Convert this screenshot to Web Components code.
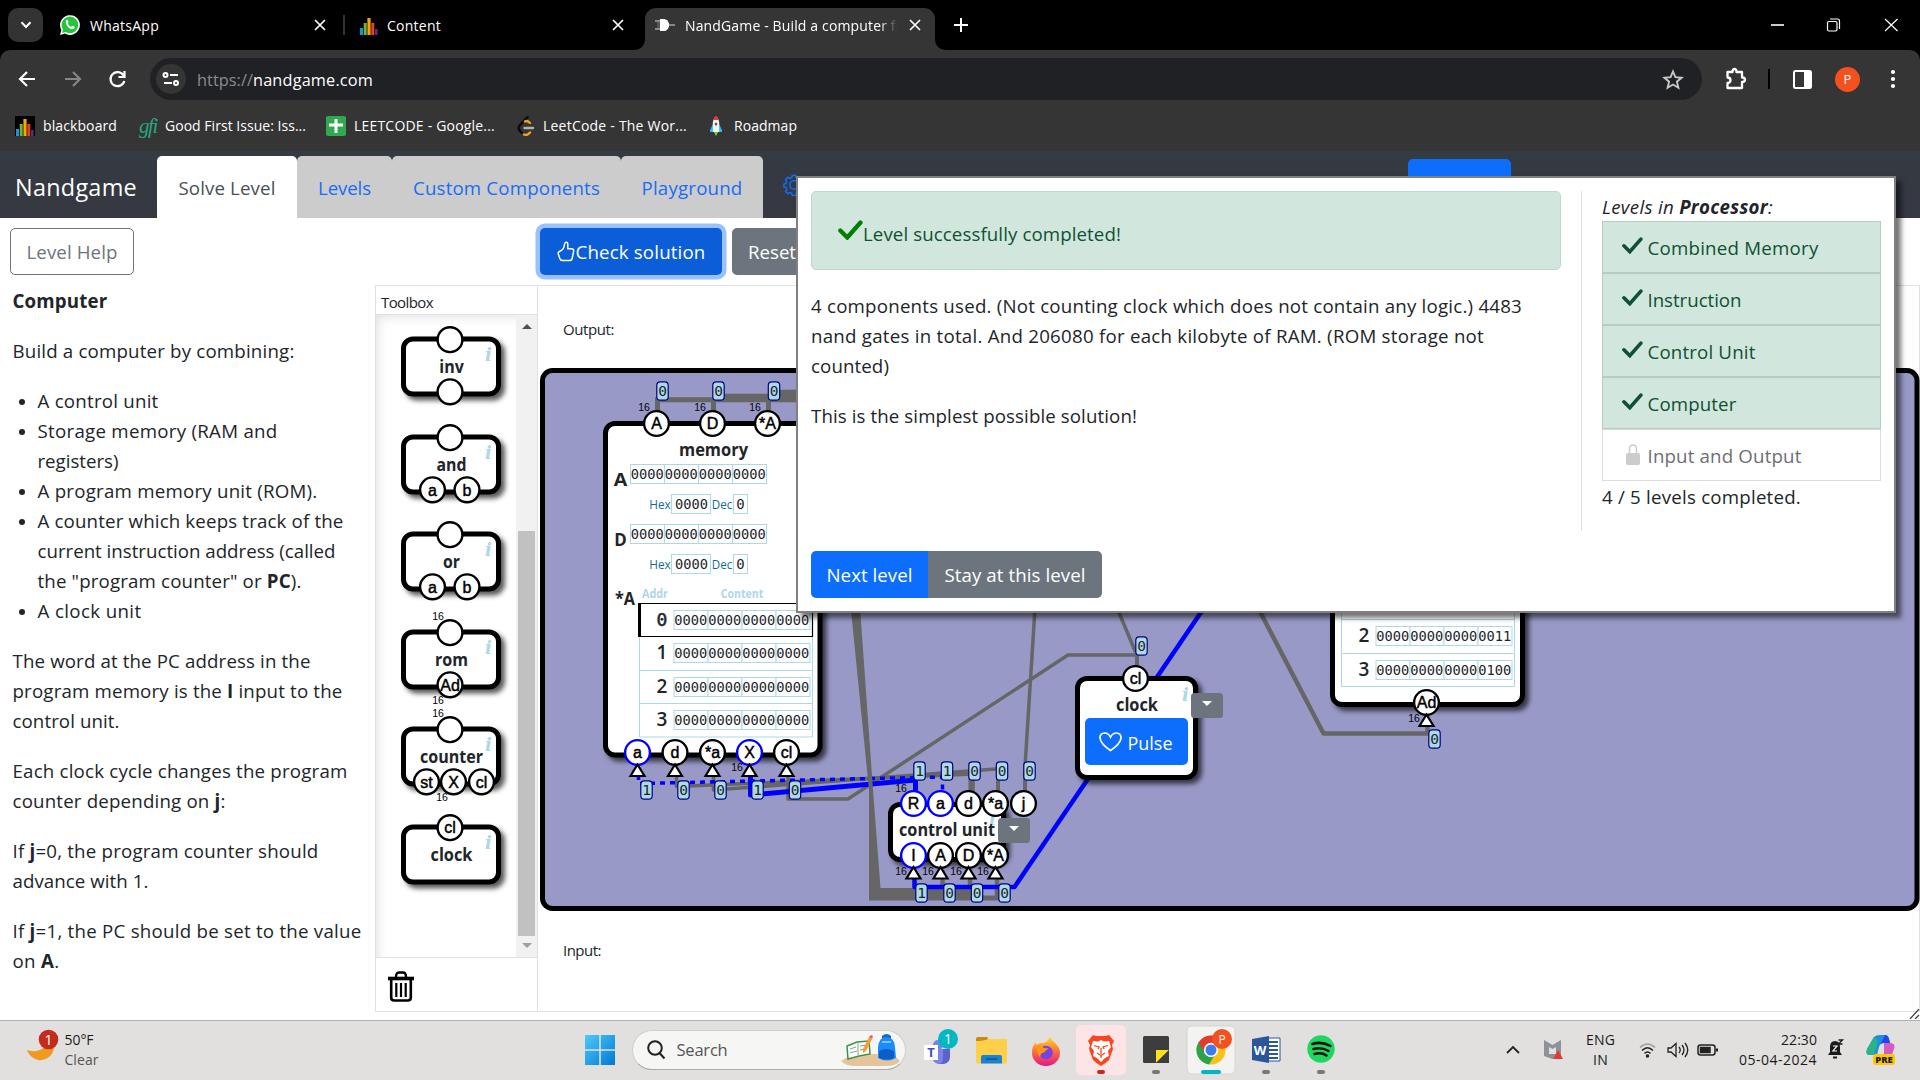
<!DOCTYPE html>
<html lang="en"><head><meta charset="utf-8"><title>NandGame - Build a computer from scratch</title>
<style>
html,body{margin:0;padding:0;width:1920px;height:1080px;overflow:hidden;background:#fff}
body{display:flex;flex-direction:column;font-family:"Open Sans","Noto Sans",sans-serif;color:#212529;font-size:18.7px}
</style></head><body>
<tab-strip></tab-strip>
<nav-bar></nav-bar>
<bookmark-bar></bookmark-bar>
<app-header></app-header>
<app-main></app-main>
<task-bar></task-bar>
<level-dialog></level-dialog>
<script>
function define(name, html){
  const t=document.createElement('template'); t.innerHTML=html;
  customElements.define(name,class extends HTMLElement{
    constructor(){super();this.attachShadow({mode:'open'}).appendChild(t.content.cloneNode(true));}
  });
}
const X=`<svg width="12" height="12" viewBox="0 0 12 12" stroke="#fff" stroke-width="1.7"><path d="M1 1l10 10M11 1L1 11"/></svg>`;
const bars=(bg)=>`<svg width="20" height="20" viewBox="0 0 20 20">${bg?'<path d="M0 0h20v20H0z" fill="#000"/>':''}<path d="M1 13h3v7H1z" fill="#1e90e8"/><path d="M4.7 8h3v12h-3z" fill="#6cb33f"/><path d="M8.4 3h3.2v17H8.4z" fill="#f5a800"/><path d="M12.300 8h3v12h-3z" fill="#e8402a"/><path d="M16 14h2.600v6H16z" fill="#5b2a86"/></svg>`;

/* ---------- browser tab strip ---------- */
define('tab-strip',`<style>
:host{display:flex;height:50px;background:#000;color:#fff;font-size:14px;align-items:center;flex:none;line-height:20px;box-shadow:0 12px 0 #000}
.dd{width:35px;height:34px;border-radius:10px;background:#333;margin-left:8px;display:flex;align-items:center;justify-content:center}
.tab{display:flex;align-items:center;height:50px;box-sizing:border-box}
svg{display:block;flex:none}.sp{flex:1}
fit-text{padding-top:1px}
.act{background:#353535;height:42px;align-self:flex-end;border-radius:11px 11px 0 0;width:290px;padding:0 14px 8px 10px}
.fade{width:212px;overflow:hidden;white-space:nowrap;margin-left:10px;-webkit-mask-image:linear-gradient(90deg,#000 195px,transparent 212px);mask-image:linear-gradient(90deg,#000 195px,transparent 212px)}
</style>
<div class="dd"><svg width="12" height="8" viewBox="0 0 12 8" fill="none" stroke="#fff" stroke-width="2"><path d="M1.500 1.200L6 6l4.500-4.800"/></svg></div>
<div class="tab" style="width:301px;margin-left:17px"><svg width="20" height="20" viewBox="0 0 20 20"><path d="M0 20l1.400-5A9.900 9.900 0 1 1 5 18.600z" fill="#fff"/><path d="M2 18l1-3.500A8.300 8.300 0 1 1 5.600 17z" fill="#25c43c"/><path d="M6.200 5.200c.8-.8 1.400-.5 1.700.3l.6 1.500c.2.5-.7 1.100-.8 1.500.7 1.500 2 2.600 3.500 3.200.5 0 1-1 1.400-1l1.700.9c.8.500.2 2-.9 2.400-3.800 1.200-8.800-4.600-7.200-8.800z" fill="#fff"/></svg>
<fit-text w="69" style="margin:0 0 0 10px">WhatsApp</fit-text><div class="sp"></div><div style="padding-right:35px">${X}</div></div>
<div class="tab" style="width:302px;margin-left:-18px;"><div style="width:2px;height:20px;background:#333;margin-right:14px"></div>${bars(0)}<fit-text w="54" style="margin-left:8px">Content</fit-text><div class="sp"></div><div style="padding-right:21px">${X}</div></div>
<svg width="12" height="12" style="align-self:flex-end;margin-left:-12px"><path d="M0 12Q12 12 12 0V12z" fill="#353535"/></svg>
<div class="tab act"><svg width="20" height="14" viewBox="0 0 20 14"><path d="M5 1h4q4 0 5.500 6Q13 13 9 13H5z" fill="#fff"/><path d="M0 3h5M0 11h5M14 7h6" stroke="#888" stroke-width="1.800"/><path d="M2 7h3" stroke="#555" stroke-width="6"/></svg><div class="fade"><fit-text w="202">NandGame - Build a computer</fit-text> from scratch</div><div class="sp"></div>${X}</div>
<svg width="12" height="12" style="align-self:flex-end"><path d="M12 12Q0 12 0 0V12z" fill="#353535"/></svg>
<svg width="14" height="14" style="margin-left:7px" stroke="#fff" stroke-width="2"><path d="M7 0v14M0 7h14"/></svg>
<div class="sp"></div>
<svg width="130" height="14" viewBox="0 0 130 14" fill="none" stroke="#fff" stroke-width="1.200" style="margin-right:20px"><path d="M1 7h13" stroke-width="1.600"/><rect x="57.500" y="3.500" width="9.500" height="9.500" rx="1.500"/><path d="M60 1h7.500a2 2 0 0 1 2 2v8"/><path d="M115 1l12.500 12M127.500 1L115 13"/></svg>`);

/* ---------- address row ---------- */
define('nav-bar',`<style>
:host{display:flex;height:56px;padding-top:2px;box-sizing:border-box;border-radius:10px 10px 0 0;background:#353535;align-items:center;flex:none;font-size:16.300px;line-height:24px;position:relative}
svg{display:block;flex:none}
.omni{display:flex;align-items:center;width:1552px;height:42px;border-radius:21px;background:#202124;color:#fff;box-sizing:border-box;padding:0 18px 0 6px}
.site{width:30px;height:30px;border-radius:50%;background:#353535;display:flex;align-items:center;justify-content:center;margin-right:11px}
.p{width:25px;height:25px;border-radius:50%;background:#f4511e;color:#fff;font:13px/25px "Open Sans",sans-serif;text-align:center}
.omni fit-text{padding-top:2px}
</style>
<svg width="150" height="24" viewBox="0 0 150 24" fill="none" stroke="#fff" stroke-width="2.200"><path d="M35 12H20.500M27 5l-7 7 7 7"/><path d="M65 12h14.500M73 5l7 7-7 7" stroke="#868686"/><path d="M123.500 8.500A7 7 0 1 0 124.300 14M124.500 4v6h-6"/></svg>
<div class="omni"><div class="site"><svg width="18" height="14" viewBox="0 0 18 14" fill="none" stroke="#fff" stroke-width="2"><circle cx="3.500" cy="3" r="2"/><path d="M8 3h8M2 11h8"/><circle cx="14" cy="11" r="2"/></svg></div>
<fit-text w="56" style="color:#8b8c8f">https://</fit-text><fit-text w="120">nandgame.com</fit-text>
<div style="flex:1"></div><svg width="22" height="21" viewBox="0 0 22 21" fill="none" stroke="#c7c7c7" stroke-width="1.900"><path d="M11 2.500l2.400 5.700 6.200.5-4.700 4 1.500 6.100L11 15.500l-5.400 3.300 1.500-6.100-4.700-4 6.200-.5z"/></svg></div>
<svg width="24" height="24" viewBox="0 0 24 24" style="margin-left:22px" fill="none" stroke="#fff" stroke-width="2.300"><path d="M3.500 5h5c-.3-4 4.300-4 4 0h5.500v5.500c4 0 4 4.500 0 4.500v6H3.500v-5c4-.4 4-5.200 0-5.500z" stroke-linejoin="round"/></svg>
<div style="width:2px;height:20px;background:#000;margin:0 23px 0 20px"></div>
<svg width="19" height="19" viewBox="0 0 19 19"><rect x="1" y="1" width="17" height="17" rx="1.500" fill="none" stroke="#fff" stroke-width="2"/><path d="M11 1h7v17h-7z" fill="#fff"/></svg>
<div class="p" style="margin-left:23px">P</div>
<svg width="6" height="20" viewBox="0 0 6 20" fill="#fff" style="margin-left:30px"><circle cx="3" cy="3" r="2.100"/><circle cx="3" cy="10" r="2.100"/><circle cx="3" cy="17" r="2.100"/></svg>`);

define('bookmark-bar',`<style>
:host{display:flex;height:45px;background:#353535;align-items:center;flex:none;font-size:14px;color:#fff;line-height:20px;padding-left:15px;box-sizing:border-box;padding-bottom:5px}
svg{display:block;flex:none}fit-text{margin-left:8px}
.g{font:italic 21px/20px "Liberation Serif",serif;color:#27a583;margin-left:22px}
</style>${bars(1)}<fit-text w="74">blackboard</fit-text>
<fit-text class="g" w="18">gfi</fit-text><fit-text w="141">Good First Issue: Iss...</fit-text>
<svg width="20" height="20" viewBox="0 0 20 20" style="margin-left:20px"><rect width="20" height="20" rx="2" fill="#2fa84f"/><path d="M8.500 3h3v14h-3z M3 7.500h14v3H3z" fill="#fff"/></svg><fit-text w="141">LEETCODE - Google...</fit-text>
<svg width="18" height="20" viewBox="0 0 18 20" fill="none" stroke-width="2.400" stroke-linecap="round" style="margin-left:22px"><path d="M10.500 1L3 9c-1.800 2-1.800 4 0 6l2 2" stroke="#0a0a0a"/><path d="M8 5.500c2-1.200 3-.5 5 1.500M7 18.500c3 1.200 4.500 0 6-2" stroke="#f7a01b"/><path d="M7.500 12H16" stroke="#b3b3b3"/></svg><fit-text w="144">LeetCode - The Wor...</fit-text>
<svg width="12" height="20" viewBox="0 0 14 20" preserveAspectRatio="none" style="margin-left:23px"><path d="M4 7L0 14v2h14v-2l-4-7z" fill="#29b6f6"/><path d="M3.300 6Q7-5 10.700 6v10H3.300z" fill="#f4f4f4"/><path d="M4 4Q7-4 10 4z" fill="#ef3131"/><circle cx="7" cy="8" r="1.500" fill="#555"/><path d="M4.500 16h5L7 20z" fill="#6fcf3c"/></svg><fit-text w="63" style="margin-left:12px">Roadmap</fit-text>`);

/* ---------- game header ---------- */
const gear=`<svg width="22" height="22" viewBox="0 0 22 22" fill="none" stroke="#0d6efd" stroke-width="1.500"><circle cx="11" cy="11" r="4.200"/><path d="M9.300 1.500h3.400l.6 2.300 1.700.7 2-1.200 2.400 2.400-1.200 2 .7 1.700 2.200.6v3l-2.200.6-.7 1.700 1.200 2-2.400 2.400-2-1.200-1.700.7-.6 2.200H9.300l-.6-2.200-1.700-.7-2 1.200-2.400-2.400 1.200-2-.7-1.700-2.200-.6v-3l2.200-.6.7-1.700-1.200-2L5 3.300l2 1.200 1.700-.7z"/></svg>`;
define('app-header',`<style>
:host{display:flex;height:67px;background:linear-gradient(#343b42,#363842);flex:none;align-items:flex-end;line-height:30px}
.brand{color:#fff;font-size:23.400px;align-self:center;margin-left:15px;width:142px;margin-bottom:-5px}
.t{height:62px;display:flex;align-items:center;justify-content:center;background:#ccc;color:#1a6cf5;border-radius:5px 5px 0 0;box-sizing:border-box;padding-top:2px}
.on{background:#fff;color:#495057}
.b{width:103px;height:59px;background:#0d6efd;border-radius:5px;margin-left:603px}
</style><div class="brand"><fit-text w="122">Nandgame</fit-text></div>
<div class="t on" style="width:140px"><fit-text w="97">Solve Level</fit-text></div>
<div class="t" style="width:95px"><fit-text w="53">Levels</fit-text></div>
<div class="t" style="width:229px"><fit-text w="187">Custom Components</fit-text></div>
<div class="t" style="width:142px"><fit-text w="101">Playground</fit-text></div>
<div style="width:22px;height:44px;margin-left:20px">${gear}</div><div class="b"></div>`);

/* ---------- svg helpers for the circuit ---------- */
const txt=(x,y,s,size,w,o='')=>`<text x="${x}" y="${y+size*.36}" font-size="${size}" text-anchor="middle" ${w?`textLength="${w}" lengthAdjust="spacingAndGlyphs"`:''} ${o}>${s}</text>`;
const pin=(x,y,s='',c='#000')=>`<circle cx="${x}" cy="${y}" r="12.400" fill="#fff" stroke="${c}" stroke-width="2.400"/>`+(s?txt(x,y,s,16,0,'font-family="Liberation Sans" fill="#000" stroke="#000" stroke-width=".45"'):'');
const n16=(x,y)=>txt(x,y,'16',10.5,0,'font-family="Liberation Sans" fill="#000"');
const info=(x,y)=>txt(x,y,'i',18,0,'font-family="DejaVu Serif" font-style="italic" font-weight="700" fill="#add8e6"');
const box=(x,y,w,h)=>`<rect x="${x+2.5}" y="${y+2.5}" width="${w-5}" height="${h-5}" rx="9.500" fill="#fff" stroke="#000" stroke-width="5" class="sh"/>`;
const name=(x,y,s,w)=>txt(x,y,s,18.5,w,'font-weight="700" fill="#212529"');
const tri=(x,y)=>`<path d="M${x} ${y}l7 11.500h-14z" fill="#fff" stroke="#000" stroke-width="2.200"/>`;
const mono='font-family="DejaVu Sans Mono"';
const badge=(x,y,v)=>`<rect x="${x-5.7}" y="${y-9.2}" width="11.400" height="18.400" rx="3.500" fill="#add8e6" stroke="#000080" stroke-width="1.200"/>`+txt(x,y,v,14.5,0,mono+' fill="#212529"');
const bits=(x,y,s)=>{let r='';for(let i=0;i<4;i++)r+=`<rect x="${x+.5+i*34}" y="${y+.5}" width="34" height="19" fill="#fff" stroke="#add8e6"/>`+txt(x+17.3+i*34,y+9.6,s.substr(i*4,4),14,33,mono+' fill="#212529"');return r;};
const Z='0'.repeat(16);

/* ---------- toolbox ---------- */
const tools=[['inv',24.5,[[49.500,'']],0],['and',30,[[32,'a'],[66.500,'b']],0],['or',17,[[32,'a'],[66.500,'b']],0],['rom',33,[[49.500,'Ad']],1],['counter',63,[[26,'st'],[53,'X'],[81,'cl']],1],['clock',42,[],0]];
const gateSvg=tools.map(([n,w,ins,b])=>`<svg width="100" height="97.500" viewBox="0.5 0 100 97.500">${box(0.5,21.5,100,60)}${pin(49.5,24.7,n=='clock'?'cl':'')}${name(51,51.3,n,w)}${info(88,40)}${ins.map(i=>pin(i[0],76.8,i[1])).join('')}${b?n16(37.5,8.7)+n16(n=='rom'?37.5:41.5,92):''}</svg>`).join('');
define('tool-box',`<style>
:host{display:flex;flex-direction:column;width:162px;border:1px solid #dee2e6;border-right:0;box-sizing:border-box;flex:none}
.h{height:28px;border-bottom:1px solid #dee2e6;font-size:15px;line-height:33px;padding-left:5px}
.a{display:flex;height:642px;border-bottom:1px solid #dee2e6;overflow:hidden}
.l{width:116px;padding-left:25px;display:flex;flex-direction:column;box-shadow:inset 6px 6px 12px -5px #ddd}
svg{display:block;overflow:visible;flex:none}.sh{filter:drop-shadow(4px 4px 2.500px rgba(0,0,0,.65))}
.s{width:21px;background:#f1f1f1;flex:none;display:flex;flex-direction:column;align-items:center}
.th{width:17px;height:405px;background:#c1c1c1;margin-top:202px}
</style><div class="h"><fit-text w="52">Toolbox</fit-text></div>
<div class="a"><div class="l">${gateSvg}</div><div class="s"><svg width="10" height="5" style="margin-top:9px"><path d="M0 5L5 0l5 5z" fill="#505050"/></svg><div class="th"></div><svg width="10" height="5" style="margin-top:7px"><path d="M0 0L5 5l5-5z" fill="#a0a0a0"/></svg></div></div>
<svg width="26" height="31" viewBox="0 0 26 31" style="margin:13px 0 0 12px" fill="none" stroke="#000"><path d="M0 7.500h26" stroke-width="3.600"/><path d="M8 6q0-4.500 3-4.500h4q3 0 3 4.500" stroke-width="2.400"/><path d="M3.200 8v18.500q0 3 3 3h13.600q3 0 3-3V8" stroke-width="2.600"/><path d="M8.300 12v14M13 12v14M17.700 12v14" stroke-width="2.200"/></svg>`);

/* ---------- circuit board: wires, nodes, pins ---------- */
const drop=(x,y)=>`<rect x="${x}" y="${y}" width="32" height="25" rx="3.500" fill="#6c757d"/><path d="M${x+11} ${y+8}h10l-5 5z" fill="#fff"/>`;
const row=(x,y,n,s)=>bits(x+34.5,y,s)+txt(x+23,y+9.5,n,n==='0'?18:19,0,(n==='0'?mono+' stroke="#212529" stroke-width=".5"':'font-weight="600"')+' fill="#212529"');
const wire=(d,w,c='#666',o='')=>`<path d="${d}" fill="none" stroke="${c}" stroke-width="${w}" stroke-linejoin="round" ${o}/>`;
const small=(x,y,s,w,c='#176b8e',o='')=>txt(x,y,s,12.6,w,`fill="${c}" ${o}`);
const m=mono+' fill="#212529"';
const reg=(y,l)=>name(620.5,y+15.5,l,l=='A'?13.5:12.5)+bits(630,y,Z)+small(660,y+40,'Hex',21.5)+`<rect x="671.500" y="${y+30.5}" width="39" height="19" fill="#fff" stroke="#add8e6"/>`+txt(691.5,y+40,'0000',14,33,m)+small(722,y+40,'Dec',20.5)+`<rect x="733.500" y="${y+30.5}" width="14" height="19" fill="#fff" stroke="#add8e6"/>`+txt(740.5,y+40,'0',14,0,m);
const circuit=`
<rect x="542.500" y="370.500" width="1374.500" height="538" rx="10" fill="#9999c8" stroke="#000" stroke-width="5"/>
<path d="M655 397.300H714v-3.500h55v-4h40v12.500H655z" fill="#666"/>
${wire('M657.500 400v20M713.500 400v20M768.500 400v20',5)}
${wire('M676.500 775V786.500L973 774V800',3.5)}${wire('M713.500 775V790L996 769V770',3.5)}
${wire('M788 775V799H848L1068 655H1137',3.5)}${wire('M1137 650V680M970.500 775V800M998 775V800M1025 775V800',4)}
${wire('M638.500 775V783.500L942.500 777V800',3.5,'#00f','stroke-dasharray="5 5"')}
${wire('M750.500 775V795L915.500 780V800',5,'#00f')}
<path d="M850 600h9.500L873 790 880.500 888H970V895.500H999V900.500H869V790z" fill="#666"/>
${wire('M942.500 870V895M970 870V895M997 870V898',4.5)}
${wire('M914.500 870V887H1014.500L1208 602',4.5,'#00f')}
${wire('M1024.500 775L1035.500 600',3.5)}${wire('M1115 603L1135.500 652',3.5)}
${wire('M1255 602L1323.500 733.500H1427.500V720',4.5)}
${box(603,421,219.5,336.5)}
${pin(656.5,423.5,'A')}${pin(712.5,423.5,'D')}${pin(767.5,423.5,'*A')}
${badge(662.5,391,'0')}${badge(718.5,391,'0')}${badge(774,391,'0')}${n16(644,407.5)}${n16(700,407.5)}${n16(755,407.5)}
${name(713.5,449.5,'memory',69)}${reg(464,'A')}${reg(524,'D')}
${name(625,598.5,'*A',20)}${small(655,593,'Addr',26,'#add8e6','font-weight="700"')}${small(742,593,'Content',42.5,'#add8e6','font-weight="700"')}
<path d="M639.500 637V737H812.500V637M639.500 670.500H812M639.500 703.500H812" fill="none" stroke="#add8e6"/>
<path d="M638 603.500H812.500V636.500H638" fill="none" stroke="#000" stroke-width="1.200"/><path d="M639.500 603v34" stroke="#000" stroke-width="3"/>
${row(639,610,'0',Z)}${row(639,643,'1',Z)}${row(639,677,'2',Z)}${row(639,710,'3',Z)}
${[['a',637.5,'#00f'],['d',675],['*a',712.5],['X',749.5,'#00f'],['cl',786.5]].map(p=>pin(p[1],752.5,p[0],p[2])+tri(p[1],764.5)).join('')}${n16(737,767.5)}
${[[646.5,1],[683.5,0],[720.5,0],[757.5,1],[795,0]].map(p=>badge(p[0],790,p[1])).join('')}
${box(888,802,118,60)}${info(992.5,819)}${name(947,829.5,'control unit',96)}
${[['R',913.5,'#00f'],['a',940.5,'#00f'],['d',968.5],['*a',995.5],['j',1023.5]].map(p=>pin(p[1],803.5,p[0],p[2])).join('')}
${[[919.5,1],[947,1],[974.5,0],[1002,0],[1029.5,0]].map(p=>badge(p[0],771,p[1])).join('')}${n16(901,788)}
${drop(998,818)}
${[['I',913.5,'#00f'],['A',940.5],['D',968.5],['*A',995.5]].map(p=>pin(p[1],855.5,p[0],p[2])+tri(p[1],867)+n16(p[1]-12.500,871)).join('')}
${[[921.5,1],[949.5,0],[977,0],[1004.5,0]].map(p=>badge(p[0],893,p[1])).join('')}
${box(1075,676,123,104)}${info(1185.5,695)}${pin(1135.5,678.5,'cl')}${badge(1141.5,646,'0')}${name(1137,704,'clock',42)}
<rect x="1085" y="718" width="103" height="47" rx="5" fill="#0d6efd"/><path d="M1110.500 750.500C1096 741 1099 733 1104.500 733c3.500 0 5 2 6 4.200 1-2.200 2.500-4.200 6-4.200 5.500 0 8.500 8-6 17.500z" fill="none" stroke="#fff" stroke-width="1.700"/>${txt(1150,743,'Pulse',18.7,45,'fill="#fff"')}
${drop(1191,693)}
${box(1330,500,195,207)}<path d="M1341.500 600V686.500H1514.500V600M1341.500 619.500H1514M1341.500 653.500H1514" fill="none" stroke="#add8e6"/>
${row(1341,626,'2','0000000000000011')}${row(1341,660,'3','0000000000000100')}
${pin(1426.5,702.5,'Ad')}${tri(1426.5,714.5)}${n16(1414,718)}${badge(1434.5,739,'0')}`;
define('circuit-board',`<style>
:host{display:flex;flex-direction:column;width:1383px;border:1px solid #dee2e6;box-sizing:border-box;font-size:15px;line-height:24px}
svg{display:block;overflow:visible}.sh{filter:drop-shadow(4px 4px 2.500px rgba(0,0,0,.65))}
.o{height:81px;padding:31px 0 0 25px;box-sizing:border-box}.i{padding:27px 0 0 25px}
</style><div class="o"><fit-text w="51">Output:</fit-text></div>
<svg width="1379" height="544" viewBox="538 367 1379 544">${circuit}</svg>
<div class="i"><fit-text w="38">Input:</fit-text></div>`);

/* ---------- help text ---------- */
define('help-text',`<style>
:host{display:block;width:375px;flex:none;line-height:30px;padding-left:12.500px;box-sizing:border-box;margin-top:1px}
p{margin:0 0 20px}ul{margin:0 0 20px;padding-left:25px}li::marker{font-size:18px}fit-text{display:block}
</style><p><fit-text w="95"><b>Computer</b></fit-text></p><p><fit-text w="282">Build a computer by combining:</fit-text></p>
<ul><li><fit-text w="121">A control unit</fit-text></li><li><fit-text w="240">Storage memory (RAM and</fit-text><fit-text w="81">registers)</fit-text></li><li><fit-text w="280">A program memory unit (ROM).</fit-text></li><li><fit-text w="306">A counter which keeps track of the</fit-text><fit-text w="298">current instruction address (called</fit-text><fit-text w="264">the "program counter" or <b>PC</b>).</fit-text></li><li><fit-text w="104">A clock unit</fit-text></li></ul>
<p><fit-text w="298">The word at the PC address in the</fit-text><fit-text w="330">program memory is the <b>I</b> input to the</fit-text><fit-text w="107">control unit.</fit-text></p>
<p><fit-text w="335">Each clock cycle changes the program</fit-text><fit-text w="213">counter depending on <b>j</b>:</fit-text></p>
<p><fit-text w="306">If <b>j</b>=0, the program counter should</fit-text><fit-text w="136">advance with 1.</fit-text></p>
<p><fit-text w="349">If <b>j</b>=1, the PC should be set to the value</fit-text><fit-text w="47">on <b>A</b>.</fit-text></p>`);

define('app-main',`<style>
:host{display:block;height:802px;flex:none;background:#fff}
.top{display:flex;height:67px;padding:10px 0 0 10px;box-sizing:border-box}
.b{height:47px;box-sizing:border-box;border-radius:5px;display:flex;align-items:center;justify-content:center;line-height:30px;color:#fff;flex:none}
.body{display:flex;height:727px}
</style><div class="top"><div class="b" style="width:124px;border:1px solid #6c757d;color:#6c757d"><fit-text w="91">Level Help</fit-text></div>
<div class="b" style="width:182px;margin-left:406px;background:#0b5ed7;box-shadow:0 0 0 4.500px #98c1fe"><svg width="18" height="21" viewBox="0 0 18 21" fill="none" stroke="#fff" stroke-width="1.500" stroke-linejoin="round"><path d="M8.800 1.200q2-.4 2 2.300v4.300h3.700q2.600 0 2.100 2.500l-1.400 7q-.5 2.300-3 2.300H5.500q-2 0-2.700-2L1.300 13q-.5-2 1.500-2.700Q7 8.500 7.400 4q.2-2.400 1.400-2.800z"/></svg><fit-text w="130" style="margin-left:1px">Check solution</fit-text></div>
<div class="b" style="width:80px;margin-left:10px;background:#6c757d"><fit-text w="48">Reset</fit-text></div></div>
<div class="body"><help-text></help-text><tool-box></tool-box><circuit-board></circuit-board></div>
<svg width="12" height="10" viewBox="0 0 12 10" style="display:block;margin:-3px 0 0 1908px" stroke="#444" stroke-width="1.300"><path d="M2 10L11 0M7 10l4-4"/></svg>`);

/* ---------- result dialog ---------- */
const check=(w,c)=>`<svg width="${w}" height="${w*.8}" viewBox="0 0 25 20" fill="none" stroke="${c}" stroke-width="4.300" stroke-linecap="round"><path d="M2.300 10.500l7 7L22.500 2.500"/></svg>`;
define('level-dialog',`<style>
:host{position:absolute;left:796px;top:176px;width:1100px;height:437px;box-sizing:border-box;border:2.500px solid #808080;background:#fff;box-shadow:5px 5px 5px rgba(0,0,0,.55);display:flex;padding:13px;line-height:30px}
svg{display:block;flex:none}fit-text{display:block}p{margin:0 0 20px}
.l{width:750px;display:flex;flex-direction:column}
.al{height:79px;box-sizing:border-box;border:1px solid #badbcc;border-radius:5px;background:#d1e7dd;color:#0f5132;display:flex;align-items:center;padding:6px 0 0 26px;margin-bottom:21px}
.bt{display:flex;color:#fff;margin-top:auto;height:47px;line-height:48px}
.bt div{display:flex;justify-content:center}
.r{margin-left:20px;border-left:1px solid #dee2e6;padding-left:20px;width:279px;height:340px}
.it{height:52px;box-sizing:border-box;border:1px solid #b3cdc1;background:#d1e7dd;color:#0f5132;display:flex;align-items:center;padding:2px 0 0 19px}
</style><div class="l"><div class="al">${check(25,'green').replace('<svg','<svg style="margin-top:-8px"')}<fit-text w="258">Level successfully completed!</fit-text></div>
<p><fit-text w="711">4 components used. (Not counting clock which does not contain any logic.) 4483</fit-text><fit-text w="673">nand gates in total. And 206080 for each kilobyte of RAM. (ROM storage not</fit-text><fit-text w="78">counted)</fit-text></p><p><fit-text w="326">This is the simplest possible solution!</fit-text></p>
<div class="bt"><div style="width:117px;background:#0d6efd;border-radius:5px 0 0 5px"><fit-text w="86">Next level</fit-text></div><div style="width:174px;background:#6c757d;border-radius:0 5px 5px 0"><fit-text w="141">Stay at this level</fit-text></div></div></div>
<div class="r"><fit-text w="171" style="line-height:32px;height:30px"><i>Levels in <b>Processor</b>:</i></fit-text>
${[['Combined Memory',171],['Instruction',94],['Control Unit',108],['Computer',89]].map(a=>`<div class="it">${check(21,'#0f5132').replace('<svg','<svg style="margin-top:-5px"')}<fit-text w="${a[1]}" style="margin-left:4.500px">${a[0]}</fit-text></div>`).join('')}
<div class="it" style="background:#fff;border-color:#dcdcdc;color:#6c6f73"><svg width="14" height="21" viewBox="0 0 14 21" style="margin:-3px 3px 0 4px"><path d="M3.500 10V5q0-4 3.500-4t3.500 4v5" fill="none" stroke="#ccc" stroke-width="1.500"/><rect y="9" width="14" height="12" rx="2" fill="#ccc"/></svg><fit-text w="154" style="margin-left:4.500px">Input and Output</fit-text></div>
<fit-text w="199" style="line-height:32px">4 / 5 levels completed.</fit-text></div>`);

/* ---------- taskbar ---------- */
define('task-bar',`<style>
:host{display:block;height:60px;box-sizing:border-box;border-top:1px solid #b0b0b0;background:#e1e0de;flex:none;font-size:14px;line-height:20px;color:#1b1b1b}
.r{display:flex;height:58px;align-items:center}svg{display:block;flex:none;overflow:visible}
.s{width:274px;height:40px;box-sizing:border-box;border-radius:20px;background:#f6f6f5;border:1px solid #cfcecc;border-bottom-color:#aaa;display:flex;align-items:center;padding:0 4px 0 14px;margin:0 18px 0 17px}
fit-text{display:block}.t{text-align:right}
</style><div class="r">
<svg width="38" height="32" viewBox="0 0 38 32" style="margin:-2px 0 0 27px"><path d="M27 11c1 8-4 15-12 16-7 1-13-4-15-10 9 3 18 0 20-8z" fill="#f09a24"/><circle cx="21.500" cy="6.500" r="9.800" fill="#c42b1c"/><text x="21.500" y="11.500" font-size="14" text-anchor="middle" fill="#fff">1</text></svg>
<div style="margin-left:-.5px"><fit-text w="29">50°F</fit-text><fit-text w="34" style="color:#555">Clear</fit-text></div>
<svg width="30" height="30" viewBox="0 0 30 30" style="margin-left:486px"><defs><linearGradient id="w" x2="1" y2="1" gradientUnits="objectBoundingBox"><stop stop-color="#4fc9fb"/><stop offset="1" stop-color="#0078d4"/></linearGradient></defs><path d="M0 0h14.200v14.200H0zM15.800 0H30v14.200H15.800zM0 15.800h14.200V30H0zM15.800 15.800H30V30H15.800z" fill="url(#w)"/></svg>
<div class="s"><svg width="20" height="20" viewBox="0 0 20 20" fill="none" stroke="#222" stroke-width="2" style="margin:0 11px 0 -1px"><circle cx="9" cy="8" r="6.800"/><path d="M13.500 13l5 5.500"/></svg><fit-text w="51" style="font-size:16.500px;color:#555">Search</fit-text><div style="flex:1"></div>
<svg width="60" height="34" viewBox="0 0 60 34"><path d="M0 28l12-7h40l7 7q-4 5-13 5H15Q4 33 0 28z" fill="#e6c49b"/><path d="M6 13l10-4 12-1 1 13-11 2-11 3z" fill="#f8fff6" stroke="#3f8f4f" stroke-width="1.500"/><path d="M9 16l6-2M9 20l7-2M19 13l6-1M19 17l6-1M17 10v12" stroke="#999"/><path d="M28 4l3 2-6 12-3 2v-4z" fill="#f79b3b"/><path d="M28 4l3 2 1-3-2-1z" fill="#f2547d"/><path d="M41 3q4.500-4 9 0v4h-9z" fill="#1467c8"/><path d="M37 14q1-10 8.500-10T54 14l1 11q-9 5-18 0z" fill="#1a8cff"/><path d="M38 18q7.500-4 15 0v7q-7.500 3-15 0z" fill="#0b5fc4"/><path d="M41 9h9" stroke="#7cc4ff" stroke-width="2"/></svg></div>
<svg width="27" height="32" viewBox="0 0 27 32"><circle cx="14" cy="11" r="5" fill="#7b83eb"/><path d="M8 15h18v8a7 7 0 0 1-7 7h-3a8 8 0 0 1-8-8z" fill="#5b62c9"/><path d="M8 15h11v8q0 7-4 7a8 8 0 0 1-7-8z" fill="#7b83eb"/><rect y="11" width="14" height="15" fill="#fff"/><text x="7" y="23" font-size="13" font-weight="700" text-anchor="middle" fill="#464eb8">T</text><circle cx="24" cy="5" r="10" fill="#00b7c3"/><text x="24" y="10" font-size="14" text-anchor="middle" fill="#fff">1</text></svg>
<svg width="31" height="28" viewBox="0 0 31 28" style="margin-left:25px"><path d="M0 3q0-2 2-2h9l3 4H0z" fill="#c98a12"/><path d="M0 5q8 0 12-2h19v23q0 1.500-1.500 1.500h-28Q0 27.500 0 26z" fill="#ffcf4a"/><path d="M5 21q0-2 2-2h17q2 0 2 2v6.500H5z" fill="#1882d4"/><path d="M10 23h11" stroke="#0b5394" stroke-width="1.500"/></svg>
<svg width="28" height="29" viewBox="0 0 28 29" style="margin-left:25px"><defs><linearGradient id="f" x2="0" y2="1"><stop stop-color="#ffe226"/><stop offset=".5" stop-color="#ff7139"/><stop offset="1" stop-color="#e31587"/></linearGradient></defs><path d="M18 0q1 4 6 8 4 4 4 9a13.500 12.500 0 0 1-28 0q0-7 4-11v3q5-3 8-2 5-2 6-7z" fill="url(#f)"/><circle cx="14" cy="16.500" r="6.800" fill="#7542e5"/><path d="M5 9q4 0 7 3 4 0 5 1-4 1-4 3-5 1-5 5-4-5-3-12z" fill="#ff980e"/></svg>
<svg width="50" height="50" viewBox="0 0 50 50" style="margin-left:16px"><rect width="50" height="50" rx="5" fill="#fde4e6"/><path d="M17 10l3 1h10l3-1 5 6-2 4 1 4-4 11q-3 3-8 6-5-3-8-6l-4-11 1-4-2-4z" fill="#fb4420"/><path d="M17 16l5 .500 3-1.500 3 1.500 5-.5 2 6-3 4 1 5-4 2-4 4-4-4-4-2 1-5-3-4z" fill="#fff"/><path d="M18 20.500l5 1.500-1 2M32 20.500l-5 1.500 1 2M25 23v6M21 28l4 2.500 4-2.500M25 31v2" stroke="#fb4420" stroke-width="1.300" fill="none"/><rect x="21" y="45" width="8" height="4" rx="2" fill="#c42b1c"/></svg>
<svg width="26" height="50" viewBox="0 0 26 50" style="margin-left:17px"><rect y="11" width="26" height="27" rx="1.500" fill="#3d3d3d"/><path d="M13 38V25h13z" fill="#ffe11a"/><path d="M13 38l13-13v13z" fill="#3d3d3d"/><rect x="9" y="45" width="8" height="4" rx="2" fill="#777"/></svg>
<svg width="48" height="50" viewBox="0 0 48 50" style="margin-left:18px"><rect y="1" width="48" height="48" rx="5" fill="#f3f3f2" stroke="#d5d5d3"/><circle cx="24" cy="25" r="14.500" fill="#fbc116"/><path d="M24 25L11.500 17.500A14.500 14.500 0 0 0 22 39.400l6-10z" fill="#2ba24c"/><path d="M11.500 17.500A14.500 14.500 0 0 1 36.600 18H24l-6 10z" fill="#e33b2e"/><circle cx="24" cy="25" r="7.200" fill="#fff"/><circle cx="24" cy="25" r="5.500" fill="#3b7ded"/><circle cx="35" cy="14" r="10" fill="#f4511e"/><text x="35" y="18.500" font-size="12" text-anchor="middle" fill="#fff">P</text><rect x="14" y="45" width="20" height="4" rx="2" fill="#00b7c3"/></svg>
<svg width="28" height="50" viewBox="0 0 28 50" style="margin-left:17px"><path d="M14 13h14v23H14z" fill="#fff" stroke="#2b579a"/><path d="M17 17h9M17 21h9M17 25h9M17 29h9M17 33h9" stroke="#2b579a" stroke-width="1.800"/><path d="M0 14l17-3v27L0 35z" fill="#2b579a"/><text x="8" y="30" font-size="13" font-weight="700" text-anchor="middle" fill="#fff">W</text><rect x="10" y="45" width="8" height="4" rx="2" fill="#777"/></svg>
<svg width="28" height="50" viewBox="0 0 28 50" style="margin-left:27px"><circle cx="14" cy="24" r="13.700" fill="#1ed760"/><path d="M5.500 19q9-3 18 2M6.500 24q8-2 15 2M7.500 29q7-2 12 1.500" fill="none" stroke="#111" stroke-width="2.500" stroke-linecap="round"/><rect x="10" y="45" width="8" height="4" rx="2" fill="#777"/></svg>
<div style="flex:1"></div>
<svg width="14" height="8" viewBox="0 0 14 8" fill="none" stroke="#222" stroke-width="1.800"><path d="M1 7l6-6 6 6"/></svg>
<svg width="18" height="20" viewBox="0 0 18 20" style="margin-left:24px"><path d="M0 0l8.500 5L17 0v16l-8.500 3L0 16z" fill="#8d9299"/><path d="M5 7l3.500 2L12 7v7H5z" fill="#e1e0de"/><path d="M9 19l5-9 5 9z" fill="#e53935"/></svg>
<div style="margin-left:24px;text-align:center"><fit-text w="29">ENG</fit-text><fit-text w="15" style="margin-left:7px">IN</fit-text></div>
<svg width="76" height="18" viewBox="0 0 76 18" fill="none" stroke="#222" stroke-width="1.500" style="margin-left:24px"><path d="M1 6.500q7.500-7 15 0" opacity=".35"/><path d="M3 9.500q5.500-5.500 11 0M5.500 12.500q3-3 6 0"/><circle cx="8.500" cy="15" r="1" fill="#222"/><path d="M29 7h3l5-4.500v13L32 11h-3zM40 6q2.500 3 0 6M43 4q4 5 0 10M46 2q5.500 7 0 14" stroke-width="1.300"/><rect x="59" y="4" width="17" height="10" rx="2.500"/><path d="M61.500 6.500h9.500v5h-9.500z" fill="#222"/><path d="M78 7.500v3" stroke-width="2"/></svg>
<div style="margin-left:24px;display:flex;flex-direction:column;align-items:flex-end"><fit-text w="36">22:30</fit-text><fit-text w="78">05-04-2024</fit-text></div>
<svg width="18" height="20" viewBox="0 0 18 20" style="margin-left:10px"><path d="M1 15l2-3V7q0-6 5-6t5 6v5l2 3z" fill="#1b1b1b"/><path d="M6 16.500h4v2H6z" fill="#1b1b1b"/><path d="M6 6h4l-4 5h4" fill="none" stroke="#fff" stroke-width="1.200"/><path d="M11.500 0h4l-4 4h4" fill="none" stroke="#1b1b1b" stroke-width="1.300"/></svg>
<svg width="30" height="30" viewBox="0 0 30 30" style="margin:0 24px 0 21px"><path d="M8 2q2-2 6-2h5q3 0 4 4l1 4h-6q-4 0-5 4l-2 8H4q-5 0-3-6z" fill="#1d8fe0"/><path d="M8 2L1 14q-2 6 3 6h4l4-14z" fill="#28b487"/><path d="M18 8h7q5 1 3 6l-3 8q-2 4-6 4h-6q4-2 5-6z" fill="#d45ac4"/><path d="M19 0q3 0 4 4l1 4h-6q-4 0-5 4z" fill="#1b4aef"/><rect x="7" y="19" width="22" height="11" rx="2.500" fill="#ffc800"/><text x="18" y="28" font-size="9.500" font-weight="800" text-anchor="middle" fill="#222">PRE</text></svg>
</div>`);

/* Single text line whose tracking is adjusted so that it fills exactly w pixels. */
customElements.define('fit-text',class extends HTMLElement{
  constructor(){super();this.attachShadow({mode:'open'}).innerHTML='<style>:host{display:inline-block;white-space:nowrap;flex:none}</style><span><slot></slot></span>';}
  connectedCallback(){
    const w=+this.getAttribute('w'),s=this.shadowRoot.querySelector('span'),n=this.textContent.length;
    const nat=s.getBoundingClientRect().width;
    this.style.letterSpacing=((w-nat)/n).toFixed(3)+'px';
    this.style.width=w+'px';
  }
});
</script></body></html>
